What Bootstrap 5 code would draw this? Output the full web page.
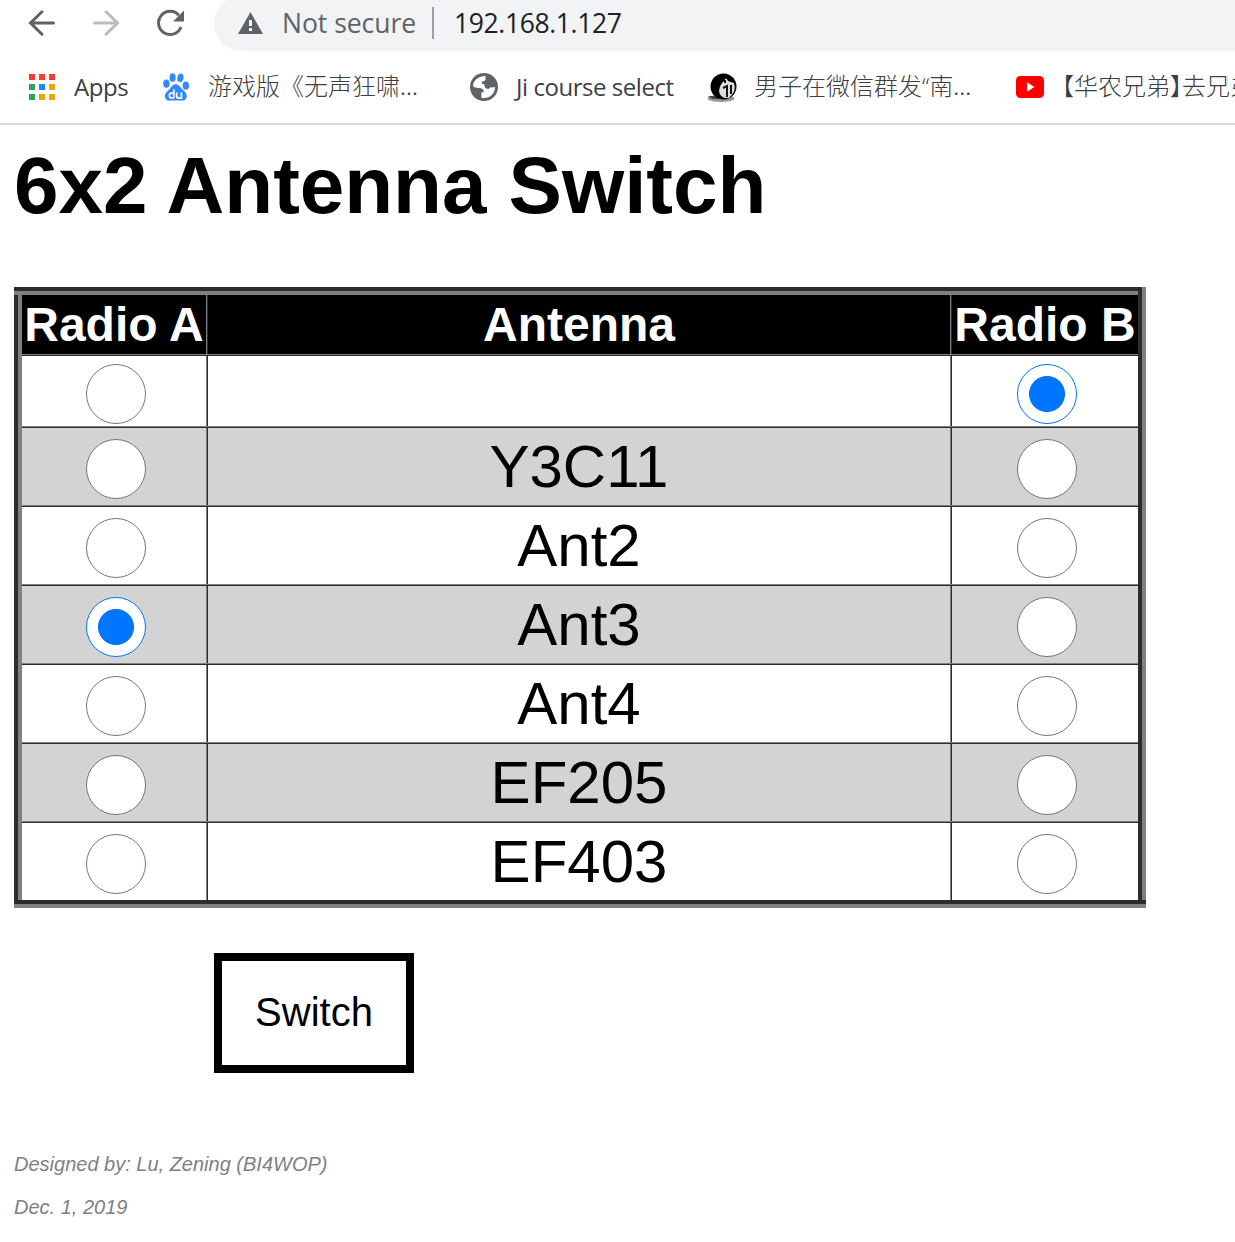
<!DOCTYPE html>
<html lang="en">
<head>
<meta charset="utf-8">
<title>6x2 Antenna Switch</title>
<link href="https://cdn.jsdelivr.net/npm/bootstrap@5.3.0/dist/css/bootstrap.min.css" rel="stylesheet">
<style>
body{font-family:"Liberation Sans",Arial,sans-serif;color:#000;background:#fff;overflow:hidden}
svg{display:block;flex:none}
.toolbar{height:51px;padding-left:28px;font-family:"Open Sans","Noto Sans",sans-serif}
.toolbar .nav-icon{width:28px;height:28px;margin-right:36px;margin-top:-5px}
.omni{height:55px;margin-top:-4px;margin-left:-6px;padding:0 0 2px 24px;background:#f1f3f4;border-radius:28px 0 0 28px;font-size:26.5px;white-space:nowrap}
.insecure{width:169px;padding:2px 0 0 19px;color:#5f6368;letter-spacing:-.02px}
.divide{width:2px;height:32px;background:#9aa0a6}
.address{padding:2px 0 0 20px;color:#202124;letter-spacing:-.38px}
.bookmarks{height:74px;border-bottom:2px solid #dadce0;color:#3c4043;font-family:"Open Sans","Noto Sans CJK SC",sans-serif;font-size:24px;white-space:nowrap;overflow:hidden}
.bookmarks .item{height:72px;flex:none}
.w-apps{width:163px;padding-left:29px}
.w-du{width:307px}
.w-ji{width:237px}
.w-news{width:309px}
.latin{letter-spacing:-.45px;margin-top:-1px}
.bookmarks .han{font-family:"Noto Sans CJK SC",sans-serif;font-weight:300;font-size:24px;margin-top:-4px}
.quote{font-family:"Open Sans",sans-serif}
.half{font-feature-settings:"halt" 1}
.page{padding:0 14px}
.title{font-size:80px;font-weight:700;line-height:92px;margin:15px 0 55px;letter-spacing:-.03px}
.ant{width:1132px;table-layout:fixed;border-collapse:collapse;border:8px outset gray;text-align:center}
.ant .c-a{width:189px}
.ant .c-name{width:744px}
.ant .c-b{width:191px}
.ant tr{height:79px}
.ant .r-head{height:64px}
.ant .r-first{height:72px}
.ant .r-last{height:82px}
.ant th,.ant td{border:2px inset gray;padding:0;vertical-align:middle;line-height:60px}
.ant thead th{background:#000;color:#fff;font-size:48px;line-height:54px;text-align:center}
.ant tbody td{font-size:60px}
.ant .shade td{background:#d3d3d3}
.ant input.form-check-input{display:block;float:none;width:60px;height:60px;margin:4px auto 0;position:relative;left:2px;border:1px solid #767676;background:#fff;box-shadow:none}
.ant .r-first input.form-check-input{margin-top:6px}
.ant input.form-check-input:checked{border-color:#0075ff;background:radial-gradient(circle,#0075ff 17.6px,#fff 18.4px)}
.send{width:200px;height:120px;margin:45px 0 0 200px;border:8px solid #000;border-radius:0;font-size:40px;color:#000;background:#fff;padding:0 0 2px}
.credits{padding-top:80px}
.credit{font-size:20px;font-style:italic;color:gray;line-height:23px;margin:0 0 20px}
</style>
</head>
<body>
<header>
<div class="toolbar d-flex align-items-center">
<svg class="nav-icon" viewBox="0 0 28 28" fill="none" stroke="#5f6368" stroke-width="3" stroke-linecap="round"><path d="M25.5 14H3M14 2.8L2.5 14 14 25.3"/></svg>
<svg class="nav-icon" viewBox="0 0 28 28" fill="none" stroke="#babcbe" stroke-width="3" stroke-linecap="round"><path d="M2.5 14H25M14 2.8L25.5 14 14 25.3"/></svg>
<svg class="nav-icon" viewBox="0 0 28 28"><path d="M25 18A11.6 11.6 0 1 1 22.8 6.2" fill="none" stroke="#5f6368" stroke-width="3"/><path d="M28 1.5V12.5H17Z" fill="#5f6368"/></svg>
<div class="omni d-flex align-items-center flex-grow-1">
<svg width="25" height="22" viewBox="0 0 25 22"><path d="M12.5 0L25 22H0Z" fill="#5f6368"/><path d="M11 8h3v6h-3zM11 16h3v3h-3z" fill="#f1f3f4"/></svg>
<span class="insecure">Not secure</span>
<span class="divide"></span>
<span class="address">192.168.1.127</span>
</div>
</div>
<div class="bookmarks d-flex">
<div class="item w-apps d-flex align-items-center">
<svg width="26" height="26" viewBox="0 0 26 26"><path d="M0 0h6v6H0zM10 0h6v6h-6zM20 0h6v6h-6z" fill="#f73c32"/><path d="M0 10h6v6H0zM0 20h6v6H0z" fill="#30a45a"/><path d="M10 10h6v6h-6z" fill="#1b8cf5"/><path d="M20 10h6v6h-6zM10 20h6v6h-6zM20 20h6v6h-6z" fill="#f4a400"/></svg>
<span class="latin" style="padding-left:19px">Apps</span></div>
<div class="item w-du d-flex align-items-center">
<svg width="26" height="28" viewBox="0 0 26 28" fill="#3388ff"><ellipse cx="3.4" cy="10.7" rx="3.2" ry="4.1"/><ellipse cx="9.6" cy="4.6" rx="3.1" ry="4.3"/><ellipse cx="17.4" cy="4.8" rx="3.1" ry="4.3" transform="rotate(12 17.4 4.8)"/><ellipse cx="22.8" cy="12.7" rx="3.2" ry="4.1"/><path d="M12.8 11.3c3 0 4 2.6 6.2 4.6 2.4 2.2 5 3.9 4.7 7.5-.2 3.1-2.4 4.4-5.1 4.2H7.2c-2.9.3-5.2-1.3-5.3-4.2-.2-3.4 2.5-5.2 4.8-7.5 2-2 3-4.6 6.1-4.6Z"/><path d="M10.8 16.2v9M10.8 20.2H8.4q-2 0-2 2.4t2 2.4h2.4M13.6 19.4v3.7q0 2 2 2h2.8v-5.7" fill="none" stroke="#fff" stroke-width="1.7"/></svg>
<span class="han" style="padding-left:19px">游戏版《无声狂啸...</span></div>
<div class="item w-ji d-flex align-items-center">
<svg width="28" height="28" viewBox="0 0 28 28"><circle cx="14" cy="14" r="14" fill="#5f6368"/><path d="M15.5 3C7.5 3 3 8.5 3 13.2q2.2 2 6 1.8 5 .2 4.8 4.3h-2.4v5.5q1.800.5 3 .3C21 25 25.200 19.500 25 14q-2 .6-4.500.300-1.500 2.400-4.200 1.200-2.300-1-1.700-3.300-.2-1.400-2.600-1.200V8.300q3.500.2 3.500-2.300Z" fill="#fff"/></svg>
<span class="latin" style="padding-left:18px">Ji course select</span></div>
<div class="item w-news d-flex align-items-center">
<svg width="32" height="32" viewBox="0 0 32 32"><ellipse cx="14" cy="27.5" rx="13.5" ry="3.5" fill="#999"/><path d="M1 25h8l4 3H5Z" fill="#444"/><circle cx="16.500" cy="15.500" r="13" fill="#000"/><path d="M17 10q2-5 4 0l6 2q3 8-5 15-9 1-10-7 1-7 5-10Z" fill="#ddd"/><path d="M16 17l4-2v11M18 9v3M24 14v9" fill="none" stroke="#111" stroke-width="2"/></svg>
<span class="han" style="padding-left:15px">男子在微信群发<span class="quote">“</span>南...</span></div>
<div class="item d-flex align-items-center">
<svg width="28" height="22" viewBox="0 0 28 22"><rect width="28" height="22" rx="4.5" fill="#f00"/><path d="M11 6.3v9.4l7.4-4.7Z" fill="#fff"/></svg>
<span class="han" style="padding-left:6px">【华农兄弟<span class="half">】</span>去兄弟</span></div>
</div>
</header>
<main class="page">
<h1 class="title">6x2 Antenna Switch</h1>
<table class="ant">
<colgroup><col class="c-a"><col class="c-name"><col class="c-b"></colgroup>
<thead><tr class="r-head"><th>Radio A</th><th>Antenna</th><th>Radio B</th></tr></thead>
<tbody>
<tr class="r-first"><td><input class="form-check-input" type="radio" name="a"></td><td></td><td><input class="form-check-input" type="radio" name="b" checked></td></tr>
<tr class="shade"><td><input class="form-check-input" type="radio" name="a"></td><td>Y3C11</td><td><input class="form-check-input" type="radio" name="b"></td></tr>
<tr><td><input class="form-check-input" type="radio" name="a"></td><td>Ant2</td><td><input class="form-check-input" type="radio" name="b"></td></tr>
<tr class="shade"><td><input class="form-check-input" type="radio" name="a" checked></td><td>Ant3</td><td><input class="form-check-input" type="radio" name="b"></td></tr>
<tr><td><input class="form-check-input" type="radio" name="a"></td><td>Ant4</td><td><input class="form-check-input" type="radio" name="b"></td></tr>
<tr class="shade"><td><input class="form-check-input" type="radio" name="a"></td><td>EF205</td><td><input class="form-check-input" type="radio" name="b"></td></tr>
<tr class="r-last"><td><input class="form-check-input" type="radio" name="a"></td><td>EF403</td><td><input class="form-check-input" type="radio" name="b"></td></tr>
</tbody>
</table>
<button class="btn send d-block" type="button">Switch</button>
<footer class="credits"><p class="credit">Designed by: Lu, Zening (BI4WOP)</p><p class="credit">Dec. 1, 2019</p></footer>
</main>
<script src="https://cdn.jsdelivr.net/npm/bootstrap@5.3.0/dist/js/bootstrap.bundle.min.js"></script>
</body>
</html>
